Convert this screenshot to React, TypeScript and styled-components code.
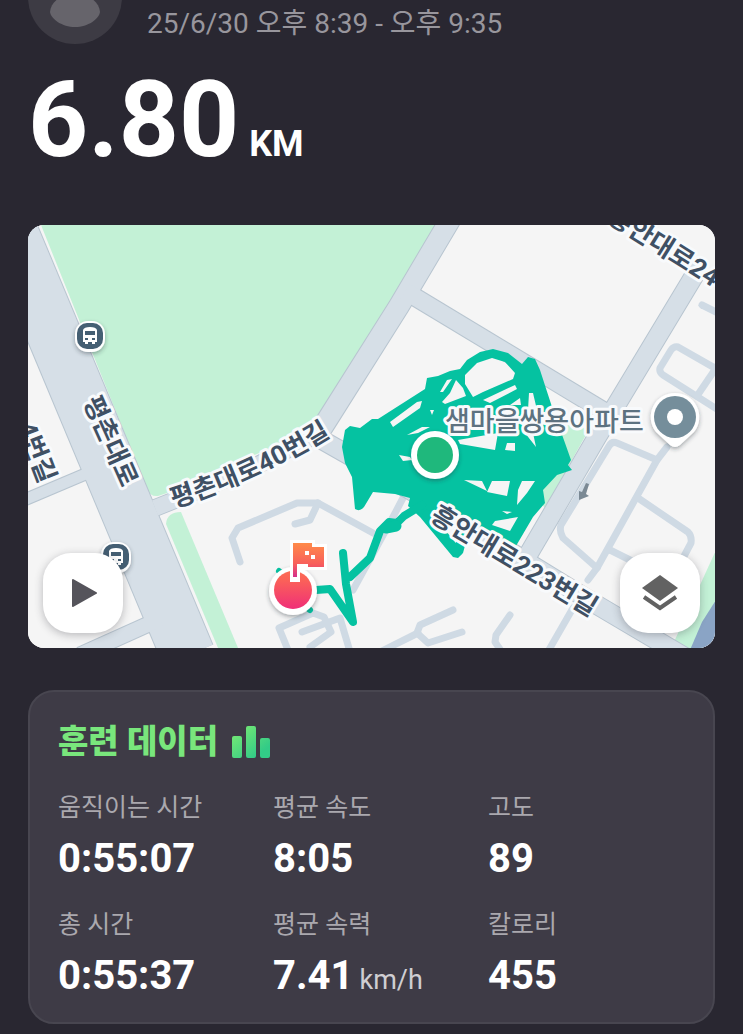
import React from 'react';
import styled, { createGlobalStyle } from 'styled-components';

const GlobalStyle = createGlobalStyle`
  * { box-sizing: border-box; }
  body {
    margin: 0;
    background: #292731;
    color: #ffffff;
    font-family: Roboto, "Noto Sans CJK KR", sans-serif;
  }
`;

const Page = styled.main`
  padding: 0 28px 10px;
`;

const Header = styled.header`
  display: flex;
  align-items: flex-start;
  gap: 25px;
`;

const Avatar = styled.svg`
  display: block;
  flex: none;
  width: 94px;
  height: 46px;
`;

const DateText = styled.p`
  margin: 0;
  color: #98969d;
  font-size: 28px;
  line-height: 48px;
`;

const Distance = styled.h1`
  display: flex;
  align-items: baseline;
  gap: 10px;
  margin: 21px 0 52px;
  font-size: 105px;
  line-height: 104px;
  font-weight: 700;
`;

const DistanceUnit = styled.span`
  font-size: 36px;
  line-height: 36px;
`;

const MapCard = styled.section`
  position: relative;
  overflow: hidden;
  border-radius: 16px;
  background: #f5f5f5;
`;

const MapSvg = styled.svg`
  display: block;
  width: 100%;
  height: auto;
`;

const RoadLabel = styled.text`
  font-family: Roboto, "Noto Sans CJK KR", sans-serif;
  font-size: 26px;
  font-weight: 700;
  fill: #3f5064;
  stroke: #f8fafc;
  stroke-width: 6px;
  stroke-linejoin: round;
  paint-order: stroke;
`;

const PlaceLabel = styled(RoadLabel)`
  font-size: 27px;
  font-weight: 500;
  fill: #5d7280;
`;

const MapButton = styled.button<{ $side: 'left' | 'right' }>`
  position: absolute;
  bottom: 15px;
  ${({ $side }) => $side}: 15px;
  display: grid;
  place-items: center;
  width: 80px;
  height: 80px;
  padding: 0;
  border: 0;
  border-radius: 28px;
  background: #ffffff;
  box-shadow: 0 2px 8px rgba(40, 40, 50, 0.3);
  cursor: pointer;
`;

const DataCard = styled.section`
  margin-top: 42px;
  padding: 29px 28px 18px;
  border: 2px solid #484650;
  border-radius: 26px;
  background: #3e3b46;
`;

const CardTitle = styled.h2`
  display: flex;
  align-items: center;
  gap: 14px;
  margin: 0 0 28px;
  color: #79e67c;
  font-size: 33px;
  line-height: 42px;
  font-weight: 900;
`;

const Stats = styled.dl`
  display: grid;
  grid-template-columns: repeat(3, 1fr);
  gap: 25px 18px;
  margin: 0;
`;

const Stat = styled.div`
  white-space: nowrap;
`;

const StatLabel = styled.dt`
  color: #aaa8ae;
  font-size: 25px;
  line-height: 34px;
`;

const StatValue = styled.dd`
  margin: 10px 0 0;
  font-size: 40px;
  line-height: 48px;
  font-weight: 700;
`;

const StatUnit = styled.span`
  margin-left: 6px;
  color: #cfced2;
  font-size: 27px;
  font-weight: 400;
`;

const stats = [
  { label: '움직이는 시간', value: '0:55:07' },
  { label: '평균 속도', value: '8:05' },
  { label: '고도', value: '89' },
  { label: '총 시간', value: '0:55:37' },
  { label: '평균 속력', value: '7.41', unit: 'km/h' },
  { label: '칼로리', value: '455' },
];

const roads = [
  { d: 'M4 215L188 655', w: 53 },
  { d: 'M322 428L329 417L399 306L453 215', w: 20 },
  { d: 'M405 291L607 413', w: 17 },
  { d: 'M700 266L597 437L518 572', w: 18 },
  { d: 'M155 508L175 500L250 469L325 430', w: 16 },
  { d: 'M322 440L410 490L597 605L690 660', w: 18 },
  { d: 'M10 506L95 470', w: 11 },
  { d: 'M160 619L80 655', w: 15 },
];

const lanes = [
  'M702 305L720 314',
  'M720 371L678 347Q674 346 671 350L660 368Q659 372 663 375L720 411',
  'M720 362L697 396',
  'M667 447L657 460L597 568L588 580',
  'M657 460L617 443Q612 441 609 446L561 525Q559 531 563 538L597 568',
  'M573 608L546 655',
  'M638 498L688 532Q692 536 691 543L682 560',
  'M610 550L640 565',
  'M510 615L496 635L495 642L504 655',
  'M240 562L232 538L238 528L297 503L318 503L373 533',
  'M318 503L310 520L295 524',
  'M403 498L393 517L353 590',
  'M290 655L279 628L313 613L324 617L331 632L310 647',
  'M302 632L340 618L351 655',
  'M453 610L420 625L417 633L428 643L462 632',
  'M418 633L380 652',
];

const trackMass = [
  'M342 447L345 430L350 426L360 428L372 419L378 419L425 389L427 378L438 376L450 371L460 369L467 360L480 352L493 349L508 353L522 364L528 357L535 359L540 370L552 407L565 443L571 460L568 465L572 470L557 475L543 490L545 503L533 517L516 546L500 540L470 527L463 553L458 558L453 557L420 517L408 506L410 498L395 494L373 492L364 507Q360 512 355 509L352 477L345 463Z',
  'M390 422L417 402L422 401L420 408L393 427Z',
  'M407 435L422 427L430 427L418 433Z',
  'M399 455L410 457L412 460L403 461Z',
  'M440 392L447 380L452 379L443 392Z',
  'M430 410L434 410L432 415Z',
  'M442 402L450 393L456 380L463 388L466 396L445 404Z',
  'M465 375L477 363L492 358L505 362L515 373L513 379L483 392L473 397L465 384Z',
  'M483 400L515 385L517 389L490 403Z',
  'M529 393L533 393L537 410L528 410Z',
  'M510 405L520 398L521 405Z',
  'M475 412L482 409L480 420Z',
  'M458 440L498 433L495 450L460 444Z',
  'M507 443L515 443L515 451L505 450Z',
  'M525 433L533 433L536 447Z',
  'M464 480L482 481L487 491Z',
  'M492 481L510 481L507 496L487 492Z',
  'M522 481L535 481L527 493L517 505L518 490Z',
  'M502 511L512 512L507 514Z',
  'M495 521L518 517L510 531L492 525Z',
  'M431 519L445 520L458 534L455 546Z',
].join('');

function BusStop({ x, y }: { x: number; y: number }) {
  return (
    <g transform={`translate(${x} ${y})`}>
      <rect x="-15" y="-15" width="30" height="31" rx="13" fill="#ffffff" filter="url(#pinShadow)" />
      <rect x="-13" y="-13" width="26" height="26" rx="10" fill="#455f73" />
      <path
        fillRule="evenodd"
        fill="#ffffff"
        d="M-7 -6Q-6 -9 0 -9T7 -6V6H5V8H2V6H-2V8H-5V6H-7ZM-5 -5V-1H5V-5ZM-5 2H-2V4H-5ZM2 2H5V4H2Z"
      />
    </g>
  );
}

function RouteMap() {
  return (
    <MapSvg viewBox="28 225 687 423" role="img" aria-label="러닝 경로 지도">
      <defs>
        <filter id="pinShadow" x="-40%" y="-40%" width="180%" height="180%">
          <feDropShadow dx="0" dy="2" stdDeviation="2" floodColor="#20303a" floodOpacity="0.4" />
        </filter>
        <linearGradient id="finish" x1="0" y1="540" x2="0" y2="612" gradientUnits="userSpaceOnUse">
          <stop offset="0" stopColor="#ff8b4a" />
          <stop offset="0.55" stopColor="#fb6258" />
          <stop offset="1" stopColor="#ee2a7b" />
        </linearGradient>
        <linearGradient id="flagPole" x1="0" y1="543" x2="0" y2="578" gradientUnits="userSpaceOnUse">
          <stop offset="0" stopColor="#ff8b4a" />
          <stop offset="0.6" stopColor="#f85f5c" />
          <stop offset="1" stopColor="#d22c8e" />
        </linearGradient>
        <path id="road40" d="M174 508Q262 480 340 430" />
      </defs>

      <rect x="28" y="225" width="687" height="423" fill="#f5f5f5" />
      <path d="M41 225H437L399 288L317 417L300 435L170 492L158 496Q150 497 147 489Z" fill="#c3f1d6" />
      <path d="M166 524Q167 512 181 512L241 655H221Z" fill="#c3f1d6" />
      <path d="M560 424H592L545 508L538 500Z" fill="#c3f1d6" />
      <path d="M716 550L668 655H700L716 610Z" fill="#c3f1d6" />
      <path d="M716 600L702 622L690 650H716Z" fill="#8aa4c5" />

      <g fill="none" stroke="#cfdae4" strokeWidth="7" strokeLinecap="round" strokeLinejoin="round">
        {lanes.map((d) => <path key={d} d={d} />)}
      </g>
      <g fill="none" stroke="#b8c5d0">
        {roads.map((r) => <path key={r.d} d={r.d} strokeWidth={r.w + 2} />)}
      </g>
      <g fill="none" stroke="#d6dfe7">
        {roads.map((r) => <path key={r.d} d={r.d} strokeWidth={r.w} />)}
      </g>
      <path d="M586 483L589 484L586 494L589 496L579 500L579 491L582 492Z" fill="#7b8994" />

      <path d={trackMass} fill="#05c2a1" fillRule="evenodd" />
      <g fill="none" stroke="#05c2a1" strokeWidth="8" strokeLinecap="round" strokeLinejoin="round">
        <path d="M422 505L404 516L397 523L389 522L380 531L370 558L350 577" />
        <path d="M396 526L386 528" strokeWidth="11" />
        <path d="M343 553L346 584L353 622L330 589L316 590" />
        <path d="M279 571L284 575M306 607L310 610" strokeWidth="6" />
        <path d="M427 514L458 552L462 536" />
      </g>

      <BusStop x={90} y={336} />
      <BusStop x={116} y={557} />

      <RoadLabel transform="translate(83 401) rotate(66)">평촌대로</RoadLabel>
      <RoadLabel transform="translate(17 426) rotate(69)">4번길</RoadLabel>
      <RoadLabel><textPath href="#road40">평촌대로40번길</textPath></RoadLabel>
      <RoadLabel transform="translate(429 520) rotate(31)">흥안대로223번길</RoadLabel>
      <RoadLabel transform="translate(606 221) rotate(32)">흥안대로24</RoadLabel>
      <PlaceLabel x="445" y="431">샘마을쌍용아파트</PlaceLabel>

      <path d="M675 393A24 24 0 0 1 694 432L680 445Q675 449 670 445L656 432A24 24 0 0 1 675 393Z" fill="#ffffff" filter="url(#pinShadow)" />
      <circle cx="675" cy="417" r="21" fill="#758e9b" />
      <circle cx="675" cy="417" r="8" fill="#ffffff" />

      <circle cx="435" cy="455" r="24" fill="#ffffff" filter="url(#pinShadow)" />
      <circle cx="435" cy="455" r="18" fill="#1fb87c" />

      <circle cx="293" cy="591" r="24" fill="#ffffff" filter="url(#pinShadow)" />
      <circle cx="293" cy="590" r="19" fill="url(#finish)" />
      <path d="M290 540H315V544H327V570H300V582H290Z" fill="#ffffff" />
      <path d="M293 543H312V547H324V567H308V564H297V577H293Z" fill="url(#flagPole)" />
      <path d="M305 551H309V555H305ZM311 555H315V559H311Z" fill="#ffffff" />
    </MapSvg>
  );
}

export default function App() {
  return (
    <>
      <GlobalStyle />
      <Page>
        <Header>
          <Avatar viewBox="0 0 94 46" aria-hidden="true">
            <circle cx="47" cy="-3" r="47" fill="#3d3b44" />
            <path d="M22 12C23 1 34 -6 47 -6S71 1 72 12C71 19 60 27 47 27S23 19 22 12Z" fill="#66646b" />
          </Avatar>
          <DateText>25/6/30 오후 8:39 - 오후 9:35</DateText>
        </Header>
        <Distance>
          6.80<DistanceUnit>KM</DistanceUnit>
        </Distance>

        <MapCard>
          <RouteMap />
          <MapButton $side="left" aria-label="경로 재생">
            <svg width="28" height="30" viewBox="-3 0 28 30" aria-hidden="true">
              <path d="M1 2L24 15L1 28Z" fill="#55545b" stroke="#55545b" strokeWidth="2" strokeLinejoin="round" />
            </svg>
          </MapButton>
          <MapButton $side="right" aria-label="지도 레이어">
            <svg width="36" height="36" viewBox="0 0 36 36" aria-hidden="true">
              <path d="M18 0L36 13L18 26L0 13Z" fill="#626262" />
              <path d="M2 22L18 33L34 22" fill="none" stroke="#626262" strokeWidth="4" />
            </svg>
          </MapButton>
        </MapCard>

        <DataCard>
          <CardTitle>
            훈련 데이터
            <svg width="39" height="32" viewBox="0 0 39 32" aria-hidden="true">
              <defs>
                <linearGradient id="bars" x1="0" y1="0" x2="1" y2="1">
                  <stop offset="0.1" stopColor="#77e874" />
                  <stop offset="0.8" stopColor="#32cb87" />
                </linearGradient>
              </defs>
              <path
                d="M2 10H8Q10 10 10 12V30Q10 32 8 32H2Q0 32 0 30V12Q0 10 2 10ZM16 0H22Q24 0 24 2V30Q24 32 22 32H16Q14 32 14 30V2Q14 0 16 0ZM30 12H36Q38 12 38 14V30Q38 32 36 32H30Q28 32 28 30V14Q28 12 30 12Z"
                fill="url(#bars)"
              />
            </svg>
          </CardTitle>
          <Stats>
            {stats.map((s) => (
              <Stat key={s.label}>
                <StatLabel>{s.label}</StatLabel>
                <StatValue>
                  {s.value}
                  {s.unit && <StatUnit>{s.unit}</StatUnit>}
                </StatValue>
              </Stat>
            ))}
          </Stats>
        </DataCard>
      </Page>
    </>
  );
}
